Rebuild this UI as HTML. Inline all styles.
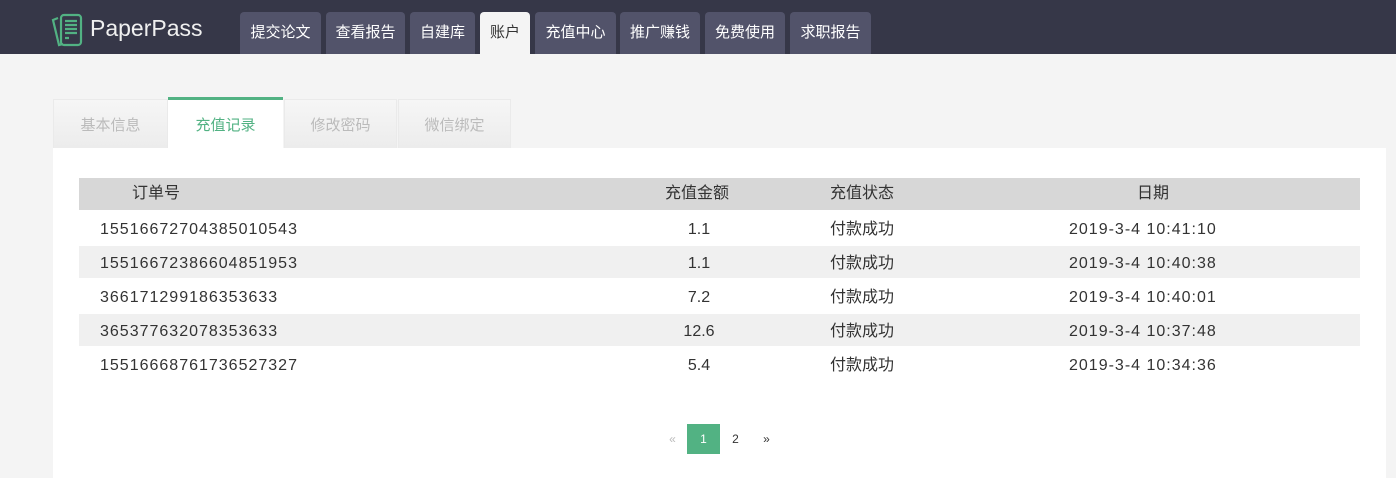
<!DOCTYPE html>
<html><head><meta charset="utf-8"><style>
*{margin:0;padding:0;box-sizing:border-box}
body{width:1396px;height:466px;overflow:hidden;background:#f4f4f4;font-family:"Liberation Sans","Noto Sans CJK SC",sans-serif;position:relative}
.hd{position:absolute;left:0;top:0;width:1396px;height:54px;background:#363748}
.logo{position:absolute;left:90px;top:15px;color:#f0f0f0;font-size:23px}
.nav{position:absolute;top:12px;height:42px;background:#52536a;color:#fff;font-size:15px;text-align:center;line-height:42px;border-radius:4px 4px 0 0}
.nav.a{background:#f4f4f4;color:#333}
.tab{position:absolute;top:99px;height:49px;background:linear-gradient(#f6f6f6,#ececec);color:#bbb;font-size:15px;text-align:center;line-height:51px;border:1px solid #eaeaea;border-bottom:none}
.tab.a{background:#fff;color:#52b283;top:97px;height:51px;border:none;border-top:3px solid #52b283}
.panel{position:absolute;left:53px;top:148px;width:1333px;height:330px;background:#fff}
.row{position:absolute;left:79px;width:1281px;font-size:16px;color:#333}
.row span{position:absolute;top:2px}
.n{letter-spacing:1px}
.pg{position:absolute;top:424px;height:30px;line-height:30px;font-size:12px;text-align:center;width:33px;color:#333}
</style></head><body>
<div class="hd">
<svg style="position:absolute;left:49px;top:12px" width="36" height="36" viewBox="0 0 36 36" fill="none" stroke="#52b283" stroke-width="2.2"><path d="M9 6 L4 8 L10 33 L14 32"/><rect x="12" y="3" width="20" height="30" rx="3"/><path d="M16 9h12M16 13h12M16 17h12M16 21h12M16 26h4"/></svg>
<div class="logo">PaperPass</div>
<div class="nav" style="left:240px;width:81px">提交论文</div>
<div class="nav" style="left:326px;width:79px">查看报告</div>
<div class="nav" style="left:410px;width:65px">自建库</div>
<div class="nav a" style="left:480px;width:50px">账户</div>
<div class="nav" style="left:535px;width:81px">充值中心</div>
<div class="nav" style="left:620px;width:80px">推广赚钱</div>
<div class="nav" style="left:705px;width:80px">免费使用</div>
<div class="nav" style="left:790px;width:81px">求职报告</div>
</div>
<div class="tab" style="left:53px;width:115px">基本信息</div>
<div class="tab a" style="left:168px;width:115px">充值记录</div>
<div class="tab" style="left:284px;width:113px">修改密码</div>
<div class="tab" style="left:398px;width:113px">微信绑定</div>
<div class="panel"></div>
<div class="row" style="top:178px;height:32px;line-height:32px;background:#d7d7d7"><span style="left:53px;top:0">订单号</span><span style="left:586px;top:0">充值金额</span><span style="left:751px;top:0">充值状态</span><span style="left:1058px;top:0">日期</span></div>
<div class="row" style="top:210px;height:36px;line-height:36px"><span class="n" style="left:21px">15516672704385010543</span><span style="left:560px;width:120px;text-align:center">1.1</span><span style="left:751px">付款成功</span><span class="n" style="left:990px">2019-3-4 10:41:10</span></div>
<div class="row" style="top:246px;height:32px;line-height:32px;background:#f0f0f0"><span class="n" style="left:21px">15516672386604851953</span><span style="left:560px;width:120px;text-align:center">1.1</span><span style="left:751px">付款成功</span><span class="n" style="left:990px">2019-3-4 10:40:38</span></div>
<div class="row" style="top:278px;height:36px;line-height:36px"><span class="n" style="left:21px">366171299186353633</span><span style="left:560px;width:120px;text-align:center">7.2</span><span style="left:751px">付款成功</span><span class="n" style="left:990px">2019-3-4 10:40:01</span></div>
<div class="row" style="top:314px;height:32px;line-height:32px;background:#f0f0f0"><span class="n" style="left:21px">365377632078353633</span><span style="left:560px;width:120px;text-align:center">12.6</span><span style="left:751px">付款成功</span><span class="n" style="left:990px">2019-3-4 10:37:48</span></div>
<div class="row" style="top:346px;height:36px;line-height:36px"><span class="n" style="left:21px">15516668761736527327</span><span style="left:560px;width:120px;text-align:center">5.4</span><span style="left:751px">付款成功</span><span class="n" style="left:990px">2019-3-4 10:34:36</span></div>
<div class="pg" style="left:656px;color:#bbb">«</div>
<div class="pg" style="left:687px;background:#52b283;color:#fff">1</div>
<div class="pg" style="left:719px">2</div>
<div class="pg" style="left:750px">»</div>
</body></html>
